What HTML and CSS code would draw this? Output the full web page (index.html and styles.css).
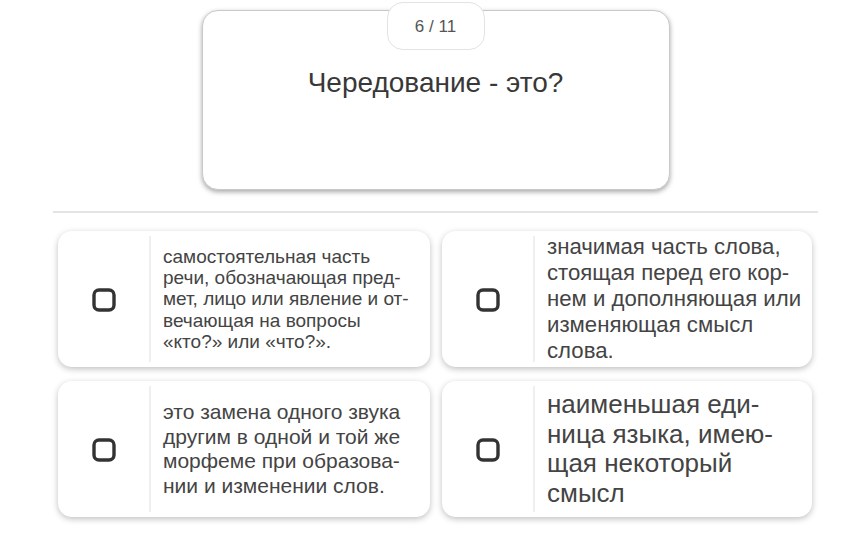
FILE: index.html
```
<!DOCTYPE html>
<html lang="ru">
<head>
<meta charset="utf-8">
<link rel="stylesheet" href="styles.css">
</head>
<body>
<div class="page">
  <div class="question">
    <div class="badge">6 / 11</div>
    <div class="qtext">Чередование - это?</div>
  </div>
  <div class="divider"></div>
  <div class="grid">
    <div class="answer">
      <div class="check"><svg width="24" height="24" viewBox="0 0 24 24"><rect x="2" y="2" width="20" height="20" rx="5" fill="none" stroke="#333" stroke-width="3.4"/></svg></div>
      <div class="sep"></div>
      <div class="atext s1">самостоятельная часть<br>речи, обозначающая пред-<br>мет, лицо или явление и от-<br>вечающая на вопросы<br>«кто?» или «что?».</div>
    </div>
    <div class="answer">
      <div class="check"><svg width="24" height="24" viewBox="0 0 24 24"><rect x="2" y="2" width="20" height="20" rx="5" fill="none" stroke="#333" stroke-width="3.4"/></svg></div>
      <div class="sep"></div>
      <div class="atext s2">значимая часть слова,<br>стоящая перед его кор-<br>нем и дополняющая или<br>изменяющая смысл<br>слова.</div>
    </div>
    <div class="answer">
      <div class="check"><svg width="24" height="24" viewBox="0 0 24 24"><rect x="2" y="2" width="20" height="20" rx="5" fill="none" stroke="#333" stroke-width="3.4"/></svg></div>
      <div class="sep"></div>
      <div class="atext s3">это замена одного звука<br>другим в одной и той же<br>морфеме при образова-<br>нии и изменении слов.</div>
    </div>
    <div class="answer">
      <div class="check"><svg width="24" height="24" viewBox="0 0 24 24"><rect x="2" y="2" width="20" height="20" rx="5" fill="none" stroke="#333" stroke-width="3.4"/></svg></div>
      <div class="sep"></div>
      <div class="atext s4">наименьшая еди-<br>ница языка, имею-<br>щая некоторый<br>смысл</div>
    </div>
  </div>
</div>
</body>
</html>
```
FILE: styles.css
```
* { box-sizing: border-box; }
html, body { margin: 0; background: #fff; }
body { font-family: "Liberation Sans", Arial, sans-serif; color: #3f3f3f; }
.page { margin-left: 53px; width: 765px; padding-top: 10px; padding-bottom: 20px; }
.question {
  position: relative;
  width: 468px;
  height: 180px;
  margin: 0 auto;
  background: #fff;
  border-radius: 16px;
  border: 1px solid #c9c9c9;
  box-shadow: 0 2px 5px rgba(0,0,0,0.35);
  padding-top: 56px;
  text-align: center;
}
.badge {
  position: absolute;
  top: -9px;
  left: 50%;
  transform: translateX(-50%);
  width: 98px;
  height: 48px;
  line-height: 48px;
  background: #fff;
  border: 1px solid #e3e3e3;
  border-radius: 16px;
  font-size: 17px;
  color: #555;
}
.qtext { font-size: 28px; line-height: 32px; color: #383838; }
.divider { height: 2px; background: #e4e4e4; margin-top: 21px; }
.grid {
  display: grid;
  grid-template-columns: 372px 370px;
  column-gap: 12px;
  row-gap: 14px;
  margin-top: 18px;
  padding-left: 5px;
}
.answer {
  display: flex;
  align-items: center;
  height: 136px;
  background: #fff;
  border-radius: 14px;
  box-shadow: 0 2px 6px rgba(0,0,0,0.25);
}
.check {
  width: 91px;
  flex: none;
  display: flex;
  justify-content: center;
  align-items: center;
  padding-top: 1px;
}
.check svg { display: block; }
.sep { width: 2px; align-self: stretch; margin: 5px 0; background: #efefef; flex: none; }
.atext { padding-left: 12px; color: #444; }
.s1 { font-size: 19px; line-height: 21.3px; }
.s2 { font-size: 22.2px; line-height: 26px; }
.s3 { font-size: 21px; line-height: 24.5px; }
.s4 { font-size: 26px; line-height: 29.5px; }
```
